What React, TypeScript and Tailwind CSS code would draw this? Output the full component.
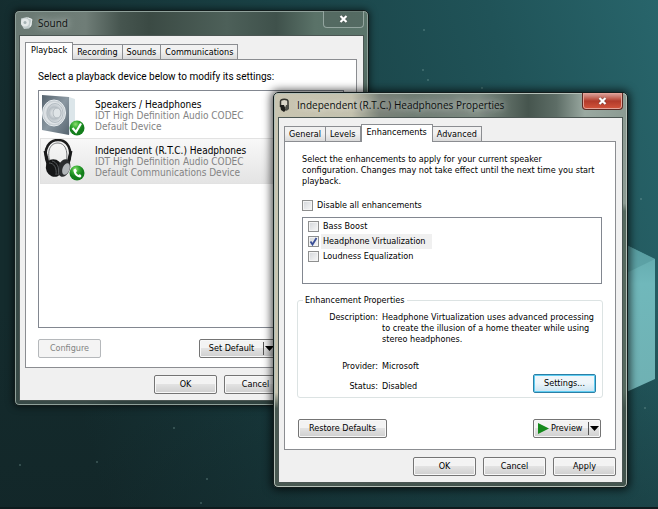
import React from 'react';

interface WindowProps {
  title: string;
  icon: React.ReactNode;
  active?: boolean;
  className: string;
  children: React.ReactNode;
}

interface TabsProps {
  tabs: string[];
  selected: string;
}

const button =
  'h-[19px] rounded-[2px] border border-[#747474] bg-linear-to-b from-[#f3f3f3] from-45% via-[#e2e2e2] via-50% to-[#cfcfcf] text-center leading-[17px] shadow-[inset_0_0_0_1px_#f8f8f8]';

const stars = [
  [424, 30], [423, 70], [428, 80], [482, 88], [174, 428], [20, 465], [97, 462], [207, 479],
  [201, 503], [645, 408], [641, 199],
];

const devices = [
  { name: 'Speakers / Headphones', codec: 'IDT High Definition Audio CODEC', status: 'Default Device', kind: 'speaker' },
  { name: 'Independent (R.T.C.) Headphones', codec: 'IDT High Definition Audio CODEC', status: 'Default Communications Device', kind: 'headphones' },
];

const enhancements = [
  { name: 'Bass Boost', checked: false },
  { name: 'Headphone Virtualization', checked: true },
  { name: 'Loudness Equalization', checked: false },
];

const Wallpaper: React.FC = () => (
  <svg className="absolute inset-0 h-full w-full" viewBox="0 0 658 509" preserveAspectRatio="none" aria-hidden="true">
    <defs>
      <linearGradient id="sky" x1="0" y1="0.2" x2="1" y2="0">
        <stop offset="0" stopColor="#142b2d" />
        <stop offset="0.45" stopColor="#1a4347" />
        <stop offset="0.75" stopColor="#205358" />
        <stop offset="1" stopColor="#28656b" />
      </linearGradient>
      <linearGradient id="floor" x1="0" y1="0" x2="0" y2="1">
        <stop offset="0.6" stopColor="#102022" stopOpacity="0" />
        <stop offset="1" stopColor="#102022" stopOpacity="0.35" />
      </linearGradient>
      <linearGradient id="hex" x1="0" y1="0" x2="0" y2="1">
        <stop offset="0" stopColor="#5ca1a5" />
        <stop offset="0.3" stopColor="#70b8bb" />
        <stop offset="1" stopColor="#6fb0b2" />
      </linearGradient>
    </defs>
    <rect width="658" height="509" fill="url(#sky)" />
    <rect width="658" height="509" fill="url(#floor)" />
    <path d="M600 232L655 259V379L600 404Z" fill="url(#hex)" />
    <path d="M600 232L655 259L600 286Z" fill="#4f9397" opacity="0.5" />
    {stars.map(([x, y]) => (
      <circle key={`${x}-${y}`} cx={x} cy={y} r="0.7" fill="#8fb3ae" opacity="0.75" />
    ))}
    <rect y="507" width="658" height="2" fill="#0e1c1e" />
  </svg>
);

const SoundIcon: React.FC = () => (
  <svg className="h-[14px] w-[13px]" viewBox="0 0 13 14" aria-hidden="true">
    <path d="M1 2.500L7 1L12 3V9L9 12.500L4 13L1 8Z" fill="#c1cccc" />
    <circle cx="5" cy="6.500" r="4" fill="#e3e8e8" />
    <circle cx="5" cy="6.500" r="1.500" fill="#a5b2b3" />
    <path d="M8 2L12 3.500L10 11" fill="none" stroke="#e9eded" />
  </svg>
);

const HeadsetIcon: React.FC = () => (
  <svg className="h-[15px] w-[11px]" viewBox="0 0 11 15" aria-hidden="true">
    <path d="M1.500 9V3.500C1.500 0.500 9 0.500 9 3.500V9" fill="#d9d6c8" stroke="#34352f" strokeWidth="1.500" />
    <path d="M1 7H5L7 12L5 14L2 12Z" fill="#1e1f1c" />
    <path d="M7 7H10V11L7.500 13L6 10Z" fill="#4d4f48" />
  </svg>
);

const SpeakerPicture: React.FC = () => (
  <svg className="h-[44px] w-[45px]" viewBox="0 1 45 44" aria-hidden="true">
    <defs>
      <linearGradient id="face" x1="0" y1="0" x2="1" y2="1">
        <stop offset="0" stopColor="#56636e" />
        <stop offset="0.5" stopColor="#8b98a2" />
        <stop offset="1" stopColor="#56646f" />
      </linearGradient>
      <radialGradient id="cone">
        <stop offset="0" stopColor="#f7f9fa" />
        <stop offset="0.45" stopColor="#b6bec4" />
        <stop offset="0.8" stopColor="#e2e6e9" />
        <stop offset="1" stopColor="#b2bbc1" />
      </radialGradient>
      <radialGradient id="green" cx="0.4" cy="0.25">
        <stop offset="0" stopColor="#8ede72" />
        <stop offset="0.5" stopColor="#35ac33" />
        <stop offset="1" stopColor="#137e1c" />
      </radialGradient>
    </defs>
    <path d="M28 5L34 7V36L28 43Z" fill="#dce6ea" />
    <path d="M1 3L28 5V43L1 38Z" fill="url(#face)" />
    <ellipse cx="13" cy="21" rx="11.500" ry="13" fill="url(#cone)" stroke="#e8edf0" />
    <ellipse cx="14" cy="21" rx="8" ry="9.500" fill="none" stroke="#b4bdc3" />
    <ellipse cx="16" cy="21" rx="4" ry="5" fill="#dfe4e7" stroke="#b0b8be" />
    <circle cx="36" cy="36" r="7.500" fill="url(#green)" />
    <path d="M31.500 36L35 40L40 31.500" fill="none" stroke="#fff" strokeWidth="2.200" />
  </svg>
);

const HeadphonesPicture: React.FC = () => (
  <svg className="h-[44px] w-[45px]" viewBox="1 1 45 44" aria-hidden="true">
    <path d="M8 27C1 9 11 2 18 2C27 2 34 11 28 27" fill="none" stroke="#1c1c1d" strokeWidth="2.500" />
    <path d="M10 25C6 10 12 5 18 5C24 5 29 11 26 25" fill="none" stroke="#77797b" strokeWidth="1" />
    <path d="M5 13L8 25M31 13L28 25" stroke="#18191a" strokeWidth="3" />
    <ellipse cx="14" cy="30" rx="8" ry="9" fill="#151617" transform="rotate(-25 14 30)" />
    <ellipse cx="24" cy="30" rx="6" ry="9" fill="#2b2d2f" transform="rotate(20 24 30)" />
    <path d="M9 25C14 25 17 30 16 37M12 23C17 24 20 30 18 37" fill="none" stroke="#56595c" />
    <ellipse cx="26" cy="31" rx="3.500" ry="6" fill="#b3b7ba" transform="rotate(20 26 31)" />
    <circle cx="37" cy="35" r="7.500" fill="url(#green)" />
    <path
      d="M33.500 31.500L35.500 30.500L37 33L36 34.200C36.500 35.500 37.500 36.500 38.500 37L40 36L41.500 38L40.500 39.500C37 40 33 35.500 33.500 31.500Z"
      fill="#fff"
    />
  </svg>
);

const DownArrow: React.FC = () => (
  <svg className="h-[5px] w-[9px]" viewBox="0 0 9 5" aria-hidden="true">
    <path d="M0 0H9L4.500 5Z" fill="#000" />
  </svg>
);

const Window: React.FC<WindowProps> = ({ title, icon, active, className, children }) => (
  <section aria-label={title} className={`absolute rounded-[5px] border border-[#121c1c] px-[4px] pb-[4px] ${className}`}>
    <header className="flex h-[24px] items-center pl-px">
      <span className="flex w-[18px] shrink-0">{icon}</span>
      <h1 className="flex-1 text-[10px] text-[#0c0f0f] [font-family:'Open_Sans',sans-serif] [text-shadow:0_0_6px_#ffffff90,0_0_10px_#ffffff80]">
        {title}
      </h1>
      <button
        type="button"
        aria-label="Close"
        className={`flex h-[17px] w-[41px] items-center justify-center self-start rounded-b-[4px] border border-t-0 ${
          active
            ? 'border-[#5d2a24] bg-linear-to-b from-[#d5938a] from-10% via-[#b23a2a] via-50% to-[#d4553c] shadow-[inset_0_0_0_1px_#e5a397]'
            : 'border-[#93a59f] bg-[#50645d]/60'
        }`}
      >
        <svg className="h-[8px] w-[9px]" viewBox="0 0 9 8" aria-hidden="true">
          <path d="M1.500 1L7.500 7M7.500 1L1.500 7" stroke="#3c3c3c" strokeWidth="3.200" opacity="0.5" />
          <path d="M1.500 1L7.500 7M7.500 1L1.500 7" stroke="#fff" strokeWidth="2.200" />
        </svg>
      </button>
    </header>
    <div className="border border-[#4b5653] bg-[#f0f0f0] py-[6px] pr-[6px] pl-[5px]">{children}</div>
  </section>
);

const Tabs: React.FC<TabsProps> = ({ tabs, selected }) => (
  <div role="tablist" className="flex items-end">
    {tabs.map((tab) => (
      <button
        key={tab}
        type="button"
        role="tab"
        aria-selected={tab === selected}
        className={
          tab === selected
            ? 'relative z-10 -mb-px h-[18px] border border-b-0 border-[#8b8d91] bg-white px-[5px] pb-[2px] leading-[15px]'
            : 'h-[15px] border border-b-0 border-l-0 border-[#8b8d91] bg-linear-to-b from-[#f1f1f1] from-45% to-[#dadada] px-[4px] leading-[14px] first:border-l'
        }
      >
        {tab}
      </button>
    ))}
  </div>
);

const Checkbox: React.FC<{ label: string; checked: boolean; highlight?: boolean }> = ({ label, checked, highlight }) => (
  <label className="flex items-center gap-[2px]">
    <span className="relative flex">
      <input
        type="checkbox"
        defaultChecked={checked}
        className="peer h-[11px] w-[11px] appearance-none border border-[#8e8f8f] bg-linear-to-br from-[#d3d6da] to-[#f8f8f8] shadow-[inset_0_0_0_1px_#f4f4f4]"
      />
      <svg className="pointer-events-none absolute inset-0 hidden h-[11px] w-[11px] peer-checked:block" viewBox="0 0 11 11">
        <path d="M2.500 5.500L4.500 8.500L8.500 2" fill="none" stroke="#3b4f97" strokeWidth="1.800" />
      </svg>
    </span>
    <span className={`px-[2px] leading-[15px] ${highlight ? 'bg-[#f0f0f0] pr-[6px]' : ''}`}>{label}</span>
  </label>
);

const SoundWindow: React.FC = () => (
  <Window
    title="Sound"
    icon={<SoundIcon />}
    className="top-[10px] left-[14px] w-[355px] shadow-[0_0_7px_1px_#00000090,inset_0_0_0_1px_#8fa09a] [background:linear-gradient(to_bottom,transparent_10%,#2b3d3bcc_50%),linear-gradient(to_right,#6a7973_0%,#6f7d77_20%,#46554f_30%,#3b4a44_38%,#4d6059_60%,#3f514b_74%,#5a7268_85%,#5b756b_100%)]"
  >
    <Tabs tabs={['Playback', 'Recording', 'Sounds', 'Communications']} selected="Playback" />
    <div className="border border-[#8b8d91] bg-white px-[12px] pt-[11px] pb-[9px]">
      <p className="text-[10px] leading-[11px] [font-family:Roboto,sans-serif]">Select a playback device below to modify its settings:</p>
      <ul className="mt-[8px] h-[238px] border border-[#828790] p-px text-[10px]">
        {devices.map((device) => (
          <li
            key={device.name}
            className={`flex h-[46px] items-center gap-[9px] border ${
              device.kind === 'headphones' ? 'border-[#e2e2e2] bg-linear-to-b from-[#f8f8f8] to-[#e4e4e4]' : 'border-transparent'
            }`}
          >
            {device.kind === 'speaker' ? <SpeakerPicture /> : <HeadphonesPicture />}
            <div className="leading-[11px] whitespace-nowrap text-[#838383]">
              <p className="text-black">{device.name}</p>
              <p>{device.codec}</p>
              <p>{device.status}</p>
            </div>
          </li>
        ))}
      </ul>
      <div className="mt-[11px] flex">
        <button type="button" disabled className="h-[19px] w-[63px] rounded-[2px] border border-[#b5b8bb] bg-[#f4f4f4] text-[#838383]">
          Configure
        </button>
        <div className={`ml-[98px] flex ${button}`}>
          <button type="button" className="w-[63px]">Set Default</button>
          <button type="button" aria-label="Set Default options" className="my-[2px] flex items-center border-l border-[#555] px-px">
            <DownArrow />
          </button>
        </div>
      </div>
    </div>
    <div className="mt-[7px] flex gap-[7px] pl-[129px]">
      <button type="button" className={`w-[63px] ${button}`}>OK</button>
      <button type="button" className={`w-[63px] ${button}`}>Cancel</button>
    </div>
  </Window>
);

const PropertiesWindow: React.FC = () => (
  <Window
    title="Independent (R.T.C.) Headphones Properties"
    icon={<HeadsetIcon />}
    active
    className="top-[92px] left-[273px] w-[355px] shadow-[0_0_9px_2px_#000000b0,inset_0_0_0_1px_#b5c0b8] [background:linear-gradient(to_bottom,transparent_76%,#40514bee_80%),linear-gradient(to_bottom,transparent_28%,#56695f_30%)_right/7px_100%_no-repeat,linear-gradient(to_right,#c9c5b1_0%,#c3c1ae_22%,#7a8278_30%,#6f7c73_40%,#7d8b82_58%,#46554e_72%,#5d6d66_80%,#9aa9a1_88%,#8b9a92_100%)]"
  >
    <Tabs tabs={['General', 'Levels', 'Enhancements', 'Advanced']} selected="Enhancements" />
    <div className="border border-[#8b8d91] bg-white px-[12px] pt-[12px] pb-[11px]">
      <div className="pr-px pl-[5px]">
        <p className="leading-[11px] whitespace-nowrap">
          Select the enhancements to apply for your current speaker
          <br />
          configuration. Changes may not take effect until the next time you start
          <br />
          playback.
        </p>
        <div className="mt-[11px]">
          <Checkbox label="Disable all enhancements" checked={false} />
        </div>
        <div className="mt-[4px] h-[67px] border border-[#828790] px-[5px] pt-px">
          {enhancements.map((item) => (
            <Checkbox key={item.name} label={item.name} checked={item.checked} highlight={item.checked} />
          ))}
        </div>
      </div>
      <fieldset className="mt-[11px] rounded-[3px] border border-[#dce3e3] pb-[4px]">
        <legend className="ml-[5px] px-[2px] leading-[11px]">Enhancement Properties</legend>
        <dl className="grid grid-cols-[80px_1fr] gap-x-[4px] pt-[6px] leading-[11px]">
          <dt className="text-right">Description:</dt>
          <dd className="whitespace-nowrap">
            Headphone Virtualization uses advanced processing
            <br />
            to create the illusion of a home theater while using
            <br />
            stereo headphones.
          </dd>
          <dt className="mt-[16px] text-right">Provider:</dt>
          <dd className="mt-[16px]">Microsoft</dd>
          <dt className="mt-[9px] text-right">Status:</dt>
          <dd className="mt-[2px] flex justify-between pr-[6px]">
            <span className="mt-[7px]">Disabled</span>
            <button
              type="button"
              className="h-[19px] w-[63px] rounded-[2px] border border-[#2c7fa5] bg-linear-to-b from-[#eff6fa] from-45% to-[#c9e4f2] shadow-[inset_0_0_0_1px_#5fcdf2]"
            >
              Settings...
            </button>
          </dd>
        </dl>
      </fieldset>
      <div className="mt-[21px] flex justify-between pr-[2px] pl-px">
        <button type="button" className={`w-[89px] ${button}`}>Restore Defaults</button>
        <div className={`flex ${button}`}>
          <button type="button" className="flex w-[54px] items-center gap-[2px] pl-[4px]">
            <svg className="h-[11px] w-[11px]" viewBox="0 0 11 11" aria-hidden="true">
              <path d="M0 0L11 5.500L0 11Z" fill="#168a1d" />
            </svg>
            Preview
          </button>
          <button type="button" aria-label="Preview options" className="my-[2px] flex items-center border-l border-[#555] px-px">
            <DownArrow />
          </button>
        </div>
      </div>
    </div>
    <div className="mt-[7px] flex justify-end gap-[7px]">
      <button type="button" className={`w-[63px] ${button}`}>OK</button>
      <button type="button" className={`w-[63px] ${button}`}>Cancel</button>
      <button type="button" className={`w-[63px] ${button}`}>Apply</button>
    </div>
  </Window>
);

const App: React.FC = () => (
  <main className="relative min-h-screen overflow-hidden bg-[#183d40] text-[9px] text-black [font-family:'DejaVu_Sans_Condensed','DejaVu_Sans',sans-serif]">
    <Wallpaper />
    <SoundWindow />
    <PropertiesWindow />
  </main>
);

export default App;
